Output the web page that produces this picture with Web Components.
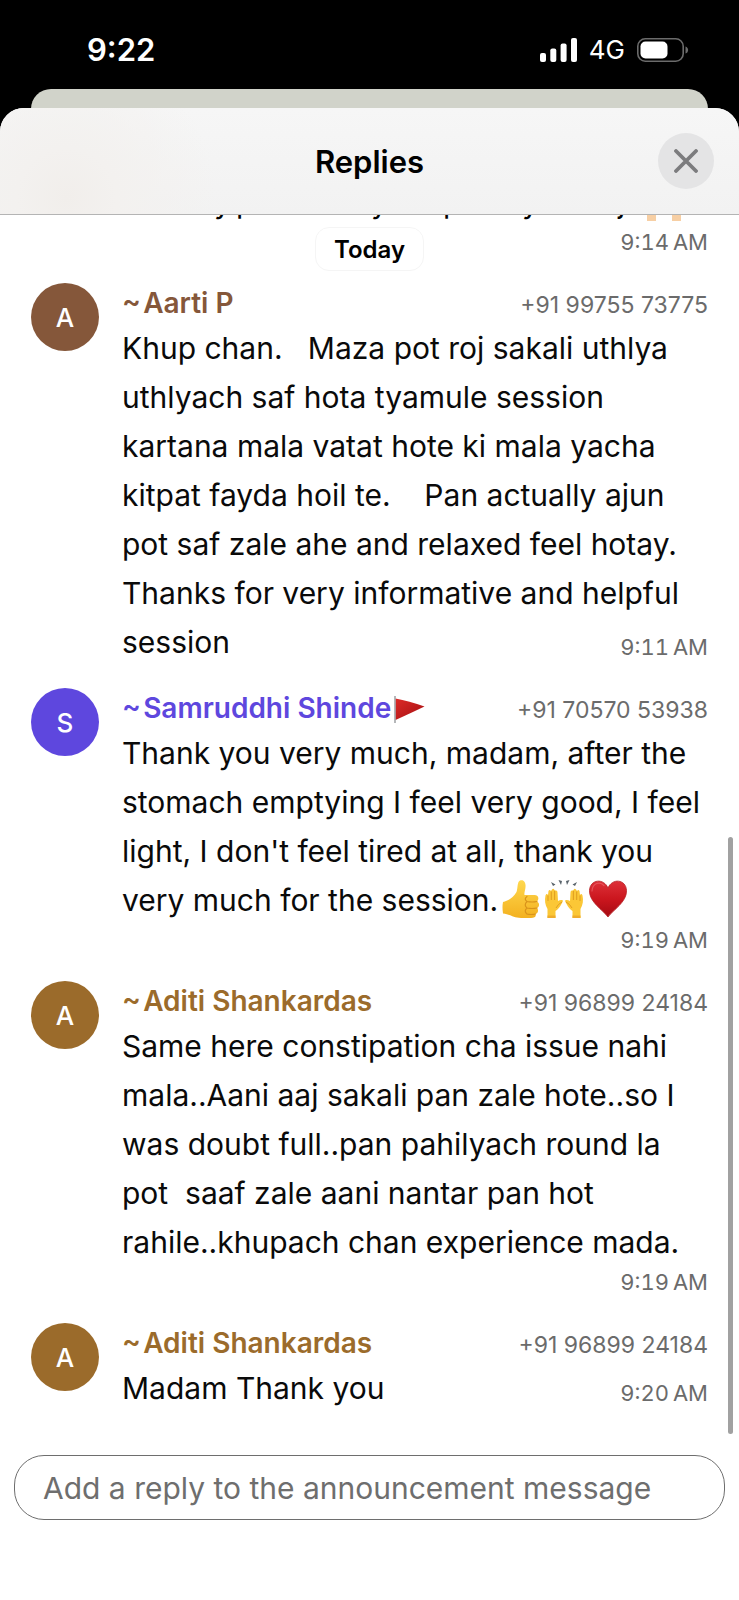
<!DOCTYPE html>
<html lang="en">
<head>
<meta charset="utf-8">
<meta name="viewport" content="width=device-width, initial-scale=1">
<title>Replies</title>
<style>
  body { margin: 0; background: #000; font-family: Inter, "Liberation Sans", sans-serif; color: #0a0a0a; }
</style>
</head>
<body>
<replies-app>
  <status-bar slot="status" time="9:22" network="4G"></status-bar>
  <sheet-header slot="header">Replies</sheet-header>
  <day-divider time="9:14&#8239;AM">Today</day-divider>
  <reply-message name="Aarti P" phone="+91 99755 73775" time="9:11&#8239;AM" tone="#85573a" inline-time>Khup chan.   Maza pot roj sakali uthlya uthlyach saf hota tyamule session kartana mala vatat hote ki mala yacha kitpat fayda hoil te.    Pan actually ajun pot saf zale ahe and relaxed feel hotay. Thanks for very informative and helpful session</reply-message>
  <reply-message name="Samruddhi Shinde" phone="+91 70570 53938" time="9:19&#8239;AM" tone="#5e47de"><emoji-icon slot="badge" name="flag"></emoji-icon>Thank you very much, madam, after the stomach emptying I feel very good, I feel light, I don't feel tired at all, thank you very much for the session.<emoji-icon name="thumb"></emoji-icon><emoji-icon name="hands"></emoji-icon><emoji-icon name="heart"></emoji-icon></reply-message>
  <reply-message name="Aditi Shankardas" phone="+91 96899 24184" time="9:19&#8239;AM" tone="#9b6b2b">Same here constipation cha issue nahi mala..Aani aaj sakali pan zale hote..so I was doubt full..pan pahilyach round la pot  saaf zale aani nantar pan hot rahile..khupach chan experience mada.</reply-message>
  <reply-message name="Aditi Shankardas" phone="+91 96899 24184" time="9:20&#8239;AM" tone="#9b6b2b" inline-time>Madam Thank you</reply-message>
  <reply-composer slot="composer" placeholder="Add a reply to the announcement message"></reply-composer>
</replies-app>
<script>
const attach = (el, html) => { el.attachShadow({ mode: "open" }).innerHTML = html; };

customElements.define("replies-app", class extends HTMLElement {
  constructor() {
    super();
    attach(this, `
      <style>
        :host { display: flex; flex-direction: column; min-height: 100vh; }
        .behind { height: 39px; margin: 0 31px -20px; border-radius: 20px 20px 0 0; background: #d1d3ca; }
        .sheet { flex: 1; display: flex; flex-direction: column; position: relative; border-radius: 24px 24px 0 0; overflow: hidden; background: #fff; }
        .list { padding: 0 31px; }
        .thumb { position: absolute; right: 6px; top: 729px; width: 5px; height: 597px; border-radius: 3px; background: #a1a1a1; }
      </style>
      <slot name="status"></slot>
      <div class="behind"></div>
      <main class="sheet">
        <slot name="header"></slot>
        <div class="list"><slot></slot></div>
        <slot name="composer"></slot>
        <div class="thumb"></div>
      </main>`);
  }
});

customElements.define("status-bar", class extends HTMLElement {
  constructor() {
    super();
    attach(this, `
      <style>
        :host { display: flex; align-items: center; justify-content: space-between; box-sizing: border-box; height: 89px; padding: 10px 50px 0 87px; color: #fff; }
        .clock { font-size: 31px; font-weight: 600; }
        .right { display: flex; align-items: center; gap: 12px; font-size: 26px; font-weight: 400; }
        svg { display: block; }
      </style>
      <span class="clock">${this.getAttribute("time")}</span>
      <span class="right">
        <svg width="37" height="24" viewBox="0 0 37 24" fill="#fff" aria-hidden="true"><rect y="15" width="6" height="9" rx="2"/><rect x="10.300" y="10.500" width="6" height="13.500" rx="2"/><rect x="20.600" y="5.500" width="6" height="18.500" rx="2"/><rect x="31" width="6" height="24" rx="2"/></svg>
        <span>${this.getAttribute("network")}</span>
        <svg width="52" height="24" viewBox="0 0 52 24" aria-hidden="true"><rect x=".8" y=".8" width="45.400" height="22.400" rx="7.500" fill="none" stroke="#6b6b6b" stroke-width="1.600"/><rect x="3.500" y="3.500" width="27" height="17" rx="5" fill="#fff"/><path d="M48.500 8.500c3.500 1 3.500 6 0 7z" fill="#6b6b6b"/></svg>
      </span>`);
  }
});

customElements.define("sheet-header", class extends HTMLElement {
  constructor() {
    super();
    attach(this, `
      <style>
        :host { display: grid; grid-template-columns: 1fr auto 1fr; align-items: center; height: 106px; padding: 0 25px; border-bottom: 1px solid #b4b4b4;
          background: radial-gradient(circle at 9% 85%, #f1eeeb 0, #f3f1ef 50px, transparent 150px), linear-gradient(#f6f6f6, #f2f2f2); }
        h1 { grid-column: 2; margin: 0; font-size: 31px; font-weight: 600; color: #000; }
        button { justify-self: end; display: grid; place-items: center; width: 56px; height: 56px; padding: 0; border: 0; border-radius: 50%; background: #e4e4e5; }
      </style>
      <h1><slot></slot></h1>
      <button type="button" aria-label="Close"><svg width="24" height="24" viewBox="0 0 24 24" fill="none" stroke="#7c7c7e" stroke-width="3.800" stroke-linecap="round"><path d="M2 2l20 20M22 2l-20 20"/></svg></button>`);
  }
});

customElements.define("day-divider", class extends HTMLElement {
  constructor() {
    super();
    attach(this, `
      <style>
        :host { display: block; margin-bottom: 12px; color: #000; }
        /* bottom edge of the reply that is scrolled under the header */
        .cut { display: flex; align-items: flex-end; box-sizing: border-box; height: 8px; margin-bottom: 4px; padding: 0 0 3px 183px; overflow: hidden; font-size: 30px; line-height: 36px; }
        .cut span { flex: none; width: 16px; }
        .g1 { margin-right: 6px; } .g2 { margin-right: 119px; } .g3 { margin-right: 56px; } .g4 { margin-right: 63px; } .g5 { margin-right: 80px; }
        .cut svg { flex: none; margin-left: 13px; align-self: flex-start; }
        .row { display: grid; grid-template-columns: 1fr auto 1fr; align-items: start; }
        .day { grid-column: 2; box-sizing: border-box; height: 44px; padding: 0 18px; border: 1px solid #f5f5f5; border-radius: 14px; font-size: 24px; font-weight: 600; line-height: 44px; }
        time { justify-self: end; font-size: 22px; line-height: 30px; font-variant-numeric: tabular-nums; color: #6b6b6b; }
      </style>
      <div class="cut" aria-hidden="true"><span class="g1">y</span><span class="g2">p</span><span class="g3">y</span><span class="g4">p</span><span class="g5">y</span><span>j</span><svg width="36" height="6" viewBox="0 0 36 6" fill="#f7cfa4"><rect width="9" height="6"/><rect x="25" width="9" height="6"/></svg></div>
      <div class="row"><span class="day"><slot></slot></span><time>${this.getAttribute("time")}</time></div>`);
  }
});

customElements.define("reply-message", class extends HTMLElement {
  constructor() {
    super();
    const a = (n) => this.getAttribute(n);
    attach(this, `
      <style>
        :host { display: grid; grid-template-columns: 68px minmax(0, 1fr); column-gap: 23px; margin-bottom: 21px; }
        .avatar { display: grid; place-items: center; width: 68px; height: 68px; border-radius: 50%; background: ${a("tone")}; color: #fff; font-size: 26px; font-weight: 500; }
        header { display: flex; justify-content: space-between; height: 41px; line-height: 41px; white-space: nowrap; }
        .name { display: flex; align-items: center; font-size: 28px; font-weight: 600; color: ${a("tone")}; }
        .phone { font-size: 23px; line-height: 44px; color: #6b6b6b; }
        p { margin: 0; font-size: 30px; line-height: 49px; white-space: pre-wrap; }
        time { display: block; height: 35px; text-align: right; font-size: 22px; line-height: 30px; font-variant-numeric: tabular-nums; color: #6b6b6b; }
        :host([inline-time]) time { margin-top: -35px; }
      </style>
      <div class="avatar" aria-hidden="true">${a("name")[0]}</div>
      <article>
        <header><span class="name">~&#8202;${a("name")}<slot name="badge"></slot></span><span class="phone">${a("phone")}</span></header>
        <p><slot></slot></p>
        <time>${a("time")}</time>
      </article>`);
  }
});

const EMOJI = {
  flag: { w: 34, h: 28, label: "red flag", svg: `
    <defs><linearGradient id="f" x2="1" y2="1"><stop offset="0" stop-color="#dc2b28"/><stop offset="1" stop-color="#a50f12"/></linearGradient></defs>
    <path d="M4.500 3.500Q18 6 33.500 11.500Q20 18 4.500 25z" fill="url(#f)"/><path d="M4 1v27" stroke="#96999c" stroke-width="1.400"/>` },
  thumb: { w: 38, h: 40, label: "thumbs up", svg: `
    <defs><linearGradient id="t" x2="0" y2="1"><stop offset="0" stop-color="#ffd84e"/><stop offset="1" stop-color="#f3b120"/></linearGradient></defs>
    <path d="M1 23C6 22 11 19 14.500 13C16 9 15 3 18 1.500C22 0 24 4 23.500 8C23.300 11 22 14 22.500 16L32.500 16C36.500 16 37.500 20 35 22.500C38 24 37.500 28 35 29C37 31 36 34.500 33.500 35C34.500 37.500 32.500 39 29 39H19C11 39 8 35 1 34.500Q0 28 1 23z" fill="url(#t)"/>
    <path d="M35 22.500Q30 23.500 25 22.500M35 29Q30 30 25 29M33.500 35Q29 36 25 35M25 17.500Q21.500 20 25 22.500Q21.500 26 25 29Q21.500 32 25 35" fill="none" stroke="#d9931b" stroke-width="1.200" stroke-linecap="round"/>` },
  hands: { w: 40, h: 40, label: "raising hands", svg: `
    <defs><g id="h"><path d="M3.500 39V30C1 26 .5 21 1.500 16.500Q2.500 14 4 16L4.500 12Q5.500 10 7 12L8 10.500Q9.500 9 10.500 11L11.500 11.500Q13.500 11 13.500 13.500L14 22Q16 20.500 18.500 21Q19.500 22 18 24Q15 30 11.500 32V39z" fill="#fbc736"/><path d="M4 16.500V22M7.300 12.500V21M10.600 12V21M18 23Q14 25 12 29" fill="none" stroke="#dc981d" stroke-width=".9"/><path d="M3.500 36.500h8V39h-8z" fill="#efac2c"/></g></defs>
    <use href="#h"/><use href="#h" transform="matrix(-1 0 0 1 40 0)"/>
    <path d="M7 3l4.500 2.500-2.500 1.500zM14.500 1l3.500 1-1 4zM25.500 1l-3.500 1 1 4zM33 3l-4.500 2.500 2.500 1.500z" fill="#59636b"/>` },
  heart: { w: 40, h: 40, label: "red heart", svg: `
    <defs><linearGradient id="r" x2="0" y2="1"><stop offset="0" stop-color="#dd3038"/><stop offset=".5" stop-color="#cb161e"/><stop offset="1" stop-color="#a50a12"/></linearGradient></defs>
    <path d="M20 38C15 31 1 23 1.500 11.500C2 0 16 -1 20 9C24 -1 38 0 38.500 11.500C39 23 25 31 20 38z" fill="url(#r)" stroke="#b51a20" stroke-width=".8"/>
    <path d="M4 12C4.500 4 12 2 16 6.500" fill="none" stroke="#ea626a" stroke-width="1.200" stroke-linecap="round" opacity=".7"/>` }
};

customElements.define("emoji-icon", class extends HTMLElement {
  constructor() {
    super();
    const e = EMOJI[this.getAttribute("name")];
    attach(this, `
      <style>
        :host { display: inline-block; height: ${e.h}px; margin-left: 4px; line-height: 0; white-space: normal; vertical-align: -8px; }
        :host([slot="badge"]) { margin-left: 0; }
        svg { display: block; }
      </style>
      <svg width="${e.w}" height="${e.h}" viewBox="0 0 ${e.w} ${e.h}" role="img" aria-label="${e.label}">${e.svg}</svg>`);
  }
});

customElements.define("reply-composer", class extends HTMLElement {
  constructor() {
    super();
    attach(this, `
      <style>
        :host { display: block; padding: 21px 14px 80px; }
        input { display: block; box-sizing: border-box; width: 100%; height: 65px; padding: 0 28px; border: 1px solid #6e6e6e; border-radius: 30px; background: #fff; font: 30px Inter, "Liberation Sans", sans-serif; color: #0a0a0a; outline: 0; }
        input::placeholder { color: #6e6e6e; opacity: 1; }
      </style>
      <input type="text" aria-label="Reply" placeholder="${this.getAttribute("placeholder")}">`);
  }
});
</script>
</body>
</html>
